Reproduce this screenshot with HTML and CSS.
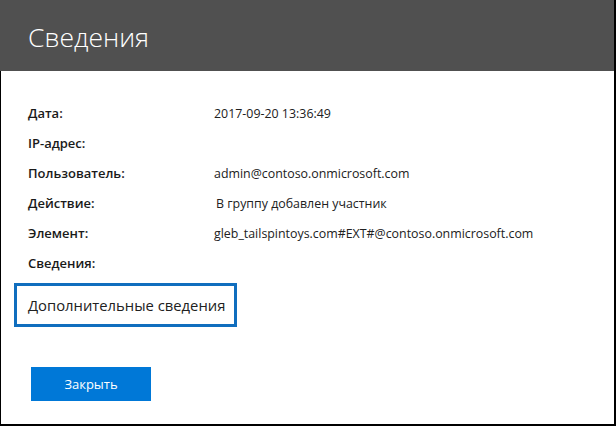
FILE: index.html
```html
<!DOCTYPE html>
<html lang="ru">
<head>
<meta charset="utf-8">
<title>Сведения</title>
<link rel="stylesheet" href="styles.css">
</head>
<body>
<div class="dialog">
  <header class="header">
    <h1 class="title">Сведения</h1>
  </header>
  <main class="content">
    <div class="fields">
      <div class="label">Дата:</div><div class="value">2017-09-20 13:36:49</div>
      <div class="label">IP-адрес:</div><div class="value"></div>
      <div class="label">Пользователь:</div><div class="value">admin@contoso.onmicrosoft.com</div>
      <div class="label">Действие:</div><div class="value value-shift">В группу добавлен участник</div>
      <div class="label">Элемент:</div><div class="value">gleb_tailspintoys.com#EXT#@contoso.onmicrosoft.com</div>
      <div class="label">Сведения:</div><div class="value"></div>
    </div>
    <div class="more">Дополнительные сведения</div>
    <button class="close">Закрыть</button>
  </main>
</div>
</body>
</html>
```

FILE: styles.css
```css
html, body {
  margin: 0;
  padding: 0;
  background: #fff;
}
.dialog {
  width: 616px;
  height: 426px;
  box-sizing: border-box;
  display: flex;
  flex-direction: column;
  border-right: 2px solid #000;
  border-bottom: 2px solid #000;
  font-family: "Open Sans", "Noto Sans", sans-serif;
  color: #212121;
}
.header {
  height: 71px;
  flex: none;
  background: #505050;
  padding-left: 28px;
  box-sizing: border-box;
  display: flex;
  align-items: flex-start;
}
.title {
  margin: 0;
  padding-top: 19px;
  font-size: 26.5px;
  line-height: 36px;
  font-weight: 300;
  color: #fff;
}
.content {
  flex: 1;
  border-left: 1px solid #000;
  padding-top: 27px;
  display: flex;
  flex-direction: column;
  align-items: flex-start;
}
.fields {
  display: grid;
  grid-template-columns: 186px auto;
  grid-auto-rows: 30px;
  padding-left: 27px;
  align-items: center;
}
.label {
  font-size: 13px;
  font-weight: 600;
  color: #1a1a1a;
}
.value {
  font-size: 12.4px;
  color: #212121;
}
.value-shift {
  padding-left: 2px;
}
.more {
  margin-top: 5px;
  margin-left: 13px;
  width: 223px;
  height: 44px;
  box-sizing: border-box;
  border: 3px solid #106ebe;
  padding-left: 11px;
  display: flex;
  align-items: center;
  font-size: 14.8px;
  color: #212121;
  white-space: nowrap;
}
.close {
  margin-top: 40px;
  margin-left: 30px;
  width: 120px;
  height: 34px;
  border: none;
  background: #0078d7;
  color: #fff;
  font-family: "Open Sans", "Noto Sans", sans-serif;
  font-size: 13px;
  padding: 0;
}
```
